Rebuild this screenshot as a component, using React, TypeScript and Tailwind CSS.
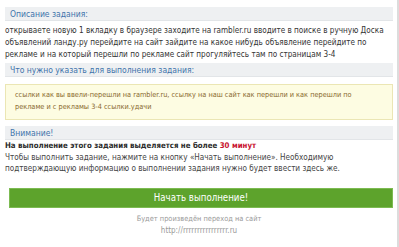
export default function App() {
  return (
    <div className="w-[399px] h-[247px] bg-white overflow-hidden border-r-2 border-[#dcdcdc]" style={{ fontFamily: '"DejaVu Sans Condensed", "DejaVu Sans", sans-serif' }}>
      <div className="pl-[5px] pr-[4px] pt-[7px] text-[8.1px] leading-[12px] text-[#333]">
        <div className="bg-[#eef0f2] border-b border-[#e2e5e8] px-[5px] h-[14px] flex items-center text-[#3f74ab] text-[8.5px]">
          Описание задания:
        </div>
        <p className="pt-[3px] pb-[3px] pr-[2px]">
          открываете новую 1 вкладку в браузере заходите на rambler.ru вводите в поиске в ручную Доска объявлений ланду.ру перейдите на сайт зайдите на какое нибудь объявление перейдите по рекламе и на который перешли по рекламе сайт прогуляйтесь там по страницам 3-4
        </p>
        <div className="bg-[#eef0f2] border-b border-[#e2e5e8] px-[5px] h-[14px] flex items-center text-[#3f74ab] text-[8.5px]">
          Что нужно указать для выполнения задания:
        </div>
        <div className="mt-[7px] bg-[#fdfce2] border border-[#ebe6b4] pl-[9px] pr-[2px] pt-[4px] pb-[6px] text-[7.3px] text-[#8a6a2e]">
          ссылки как вы ввели-перешли на rambler.ru, ссылку на наш сайт как перешли и как перешли по
          <br />
          рекламе и с рекламы 3-4 ссылки.удачи
        </div>
        <div className="mt-[6px] bg-[#eef0f2] border-b border-[#e2e5e8] px-[5px] h-[14px] flex items-center text-[#3f74ab] text-[8.5px]">
          Внимание!
        </div>
        <div className="leading-[11.5px]">
          <div className="font-bold text-[7.8px] text-[#2b2b2b]">
            На выполнение этого задания выделяется не более <span className="text-[#c8102e]">30 минут</span>
          </div>
          <div className="text-[#444]">
            Чтобы выполнить задание, нажмите на кнопку «Начать выполнение». Необходимую подтверждающую информацию о выполнении задания нужно будет ввести здесь же.
          </div>
        </div>
        <div className="pl-[4px] pt-[13px]">
          <div className="h-[20px] bg-[#5da32c] border border-[#7cbb52] flex items-center justify-center text-white text-[9.6px]">
            Начать выполнение!
          </div>
        </div>
        <div className="pt-[5px] text-center leading-[12px] text-[#9a9a9a]">
          <div className="text-[7.4px]">Будет произведён переход на сайт</div>
          <div className="text-[8px]">http://rrrrrrrrrrrrrrrr.ru</div>
        </div>
      </div>
    </div>
  );
}
